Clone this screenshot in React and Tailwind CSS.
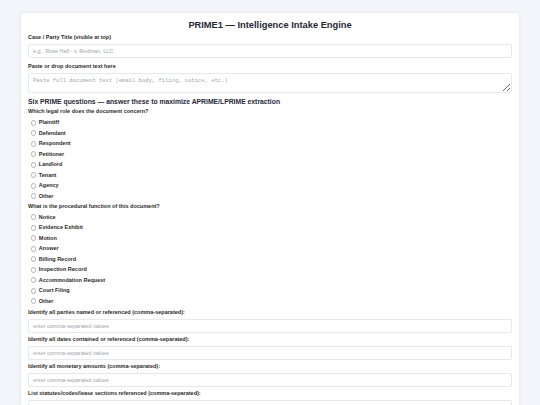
import { useState } from "react";

const ROLES = [
  "Plaintiff",
  "Defendant",
  "Respondent",
  "Petitioner",
  "Landlord",
  "Tenant",
  "Agency",
  "Other",
];

const FUNCTIONS = [
  "Notice",
  "Evidence Exhibit",
  "Motion",
  "Answer",
  "Billing Record",
  "Inspection Record",
  "Accommodation Request",
  "Court Filing",
  "Other",
];

const LISTS = [
  { id: "parties", label: "Identify all parties named or referenced (comma-separated):" },
  { id: "dates", label: "Identify all dates contained or referenced (comma-separated):" },
  { id: "money", label: "Identify all monetary amounts (comma-separated):" },
  { id: "statutes", label: "List statutes/codes/lease sections referenced (comma-separated):" },
];

const RadioGroup = ({ name, options, value, onChange }) => (
  <div className="mt-[2.25px] flex flex-col">
    {options.map((opt) => (
      <label
        key={opt}
        className="flex items-center gap-[2.5px] pl-[2.5px] h-[10.5px] text-[5.5px] leading-[7px] font-bold text-[#2a2a2a] cursor-pointer"
      >
        <input
          type="radio"
          name={name}
          checked={value === opt}
          onChange={() => onChange(opt)}
          className="appearance-none m-0 w-[5.8px] h-[5.8px] rounded-full border border-[#b3b3b3] bg-white checked:bg-[#2563eb] checked:border-[#2563eb]"
        />
        {opt}
      </label>
    ))}
  </div>
);

export default function App() {
  const [title, setTitle] = useState("");
  const [doc, setDoc] = useState("");
  const [role, setRole] = useState("");
  const [fn, setFn] = useState("");
  const [lists, setLists] = useState({});

  return (
    <div className="min-h-screen bg-[#f3f5fa] pt-[12px] px-[20px] pb-[20px] font-['Liberation_Sans',Arial,sans-serif]">
      <div className="bg-white rounded-[4px] border border-[#eceef3] shadow-[0_0_3px_rgba(0,0,0,0.05)] px-[7px] pt-[5.5px] pb-[12px]">
        <h1 className="text-center text-[9.3px] leading-[12px] font-bold text-[#1f2937]">
          PRIME1 — Intelligence Intake Engine
        </h1>

        <label className="block mt-[3px] text-[5.5px] leading-[7px] font-bold text-[#2a2a2a]">
          Case / Party Title (visible at top)
        </label>
        <input
          value={title}
          onChange={(e) => setTitle(e.target.value)}
          placeholder="e.g., Rose Hall - v. Redman, LLC"
          className="block mt-[3.5px] w-full h-[14px] border border-[#e6e8ec] rounded-[2px] px-[4px] text-[5.5px] text-[#333] outline-none placeholder:text-[#a0a4ab]"
        />

        <label className="block mt-[4.5px] text-[5.5px] leading-[7px] font-bold text-[#2a2a2a]">
          Paste or drop document text here
        </label>
        <textarea
          value={doc}
          onChange={(e) => setDoc(e.target.value)}
          placeholder="Paste full document text (email body, filing, notice, etc.)"
          className="block mt-[3.5px] w-full h-[20px] border border-[#e6e8ec] rounded-[2px] px-[4px] py-[3px] text-[5.5px] leading-[7px] font-['Liberation_Mono',monospace] text-[#333] outline-none placeholder:text-[#a0a4ab]"
        />

        <h2 className="mt-[4.25px] text-[6.8px] leading-[9px] font-bold text-[#1f2937]">
          Six PRIME questions — answer these to maximize APRIME/LPRIME extraction
        </h2>

        <div className="mt-[2px] text-[5.5px] leading-[7px] font-bold text-[#2a2a2a]">
          Which legal role does the document concern?
        </div>
        <RadioGroup name="role" options={ROLES} value={role} onChange={setRole} />

        <div className="mt-[1.25px] text-[5.5px] leading-[7px] font-bold text-[#2a2a2a]">
          What is the procedural function of this document?
        </div>
        <RadioGroup name="fn" options={FUNCTIONS} value={fn} onChange={setFn} />

        {LISTS.map((f, i) => (
          <div key={f.id} className={i === 0 ? "mt-[2.25px]" : "mt-[3px]"}>
            <label className="block text-[5.5px] leading-[7px] font-bold text-[#2a2a2a]">
              {f.label}
            </label>
            <input
              value={lists[f.id] || ""}
              onChange={(e) => setLists({ ...lists, [f.id]: e.target.value })}
              placeholder="enter comma-separated values"
              className="block mt-[3.5px] w-full h-[13.5px] border border-[#e6e8ec] rounded-[2px] px-[4px] text-[5.5px] text-[#333] outline-none placeholder:text-[#a0a4ab]"
            />
          </div>
        ))}

        <button className="mt-[8px] bg-[#1f2937] text-white text-[6px] font-bold rounded-[2px] px-[8px] py-[3px]">
          Run Intake
        </button>
      </div>
    </div>
  );
}
